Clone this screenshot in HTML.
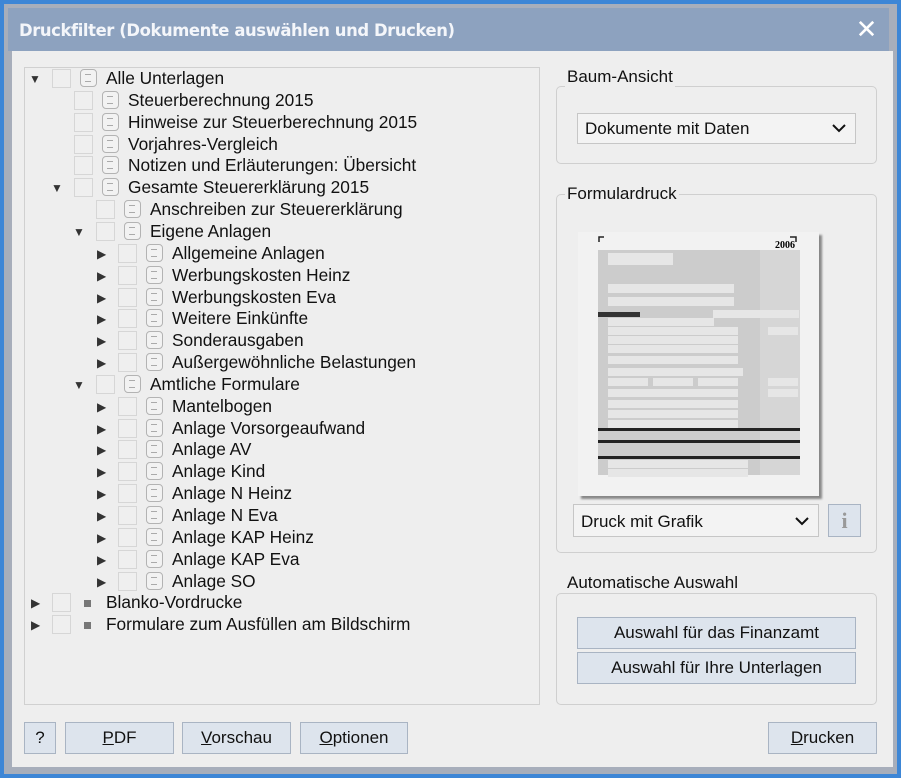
<!DOCTYPE html>
<html><head><meta charset="utf-8"><style>
*{box-sizing:border-box;margin:0;padding:0}
body{width:901px;height:778px;background:#3d86d6;font-family:"Liberation Sans",sans-serif;position:relative;overflow:hidden}
#win{position:absolute;left:4px;top:4px;width:893px;height:770px;background:#a7aebb}
#title{position:absolute;left:8px;top:8px;width:881px;height:43px;background:#8da2bf;color:#f4f6fa;font-weight:bold;font-size:16.4px;line-height:45px;padding-left:11px;font-family:"DejaVu Sans",sans-serif;letter-spacing:-0.4px}
#close{position:absolute;right:12px;top:0;font-size:26px;color:#fff}
#body{position:absolute;left:12px;top:51px;width:881px;height:716px;background:#eeeeee}
.abs{position:absolute}
#tree{left:24px;top:67px;width:516px;height:638px;border:1px solid #d0d0d0;background:#eeeeee}
.row{position:absolute;height:22px;font-size:17.3px;color:#111;line-height:22px;white-space:nowrap}
.cb{position:absolute;width:19px;height:19px;border:1px solid #d6d6d6;background:#efefef;top:2px}
.ic{position:absolute;width:17px;height:18px;border:1.5px solid #b3b3b3;border-radius:4px;top:2px;background:#f2f2f2}
.ic:before{content:"";position:absolute;left:4px;top:4px;width:6px;height:6px;border-top:1.5px solid #aaa;border-bottom:1.5px solid #aaa}
.sq{position:absolute;width:7px;height:7px;background:#777;top:9px}
.ar{position:absolute;top:1px;font-size:12px;color:#333}
fieldset{position:absolute;border:1px solid #cfcfcf;border-radius:5px}
.lg{position:absolute;font-size:17px;background:#eeeeee;padding:0 2px;color:#111}
.sel{position:absolute;border:1px solid #c6c6c6;background:#f3f3f3;font-size:17px;line-height:30px;padding-left:7px;color:#111}
.sel svg{position:absolute;right:9px;top:10px}
.btn{position:absolute;border:1px solid #a9b4c3;background:#dde4ed;font-size:17px;text-align:center;color:#111}
</style></head><body>
<div id="win"></div>
<div id="title">Druckfilter (Dokumente auswählen und Drucken)<span id="close">✕</span></div>
<div id="body"></div>
<div id="tree" class="abs"></div>
<div id="rows"></div>

<fieldset style="left:556px;top:86px;width:321px;height:78px"></fieldset>
<div class="lg" style="left:565px;top:67px">Baum-Ansicht</div>
<div class="sel" style="left:577px;top:113px;width:279px;height:31px">Dokumente mit Daten<svg width="14" height="9"><path d="M1 1L7 7L13 1" stroke="#111" stroke-width="2" fill="none"/></svg></div>

<fieldset style="left:556px;top:194px;width:321px;height:359px"></fieldset>
<div class="lg" style="left:565px;top:184px">Formulardruck</div>
<div class="abs" style="left:578px;top:232px;width:241px;height:264px;background:#f2f2f2;box-shadow:3px 3px 2px #888">
<svg width="241" height="264">
<path d="M21 10V5H26M212 5H218V10" stroke="#222" stroke-width="1.5" fill="none"/>
<text x="197" y="16" font-size="10" font-weight="bold" font-family="Liberation Serif">2006</text>
<rect x="20" y="18" width="162" height="225" fill="#ccc"/>
<rect x="182" y="18" width="40" height="225" fill="#d6d6d6"/>
<g fill="#e6e6e6">
<rect x="30" y="21" width="65" height="12"/><rect x="30" y="52" width="126" height="9"/><rect x="30" y="65" width="126" height="9"/>
<rect x="30" y="86" width="106" height="8"/><rect x="135" y="78" width="86" height="8"/>
<rect x="30" y="95" width="130" height="8"/><rect x="30" y="104" width="130" height="8"/><rect x="30" y="113" width="130" height="8"/><rect x="30" y="124" width="130" height="8"/><rect x="30" y="136" width="135" height="8"/><rect x="30" y="146" width="40" height="8"/><rect x="75" y="146" width="40" height="8"/><rect x="120" y="146" width="40" height="8"/><rect x="30" y="157" width="130" height="8"/><rect x="30" y="168" width="130" height="8"/><rect x="30" y="178" width="130" height="8"/><rect x="30" y="188" width="130" height="8"/><rect x="30" y="228" width="140" height="8"/><rect x="30" y="237" width="140" height="8"/>
<rect x="190" y="95" width="30" height="8"/><rect x="190" y="146" width="30" height="8"/><rect x="190" y="157" width="30" height="8"/>
</g>
<rect x="20" y="80" width="42" height="5" fill="#333"/>
<rect x="20" y="196" width="202" height="3" fill="#222"/><rect x="20" y="208" width="202" height="3" fill="#222"/><rect x="20" y="224" width="202" height="3" fill="#222"/>
</svg></div>
<div class="sel" style="left:573px;top:504px;width:246px;height:33px;line-height:33px">Druck mit Grafik<svg width="14" height="9" style="top:12px"><path d="M1 1L7 7L13 1" stroke="#111" stroke-width="2" fill="none"/></svg></div>
<div class="btn" style="left:828px;top:504px;width:33px;height:33px;font-family:'Liberation Serif';font-weight:bold;color:#999;font-size:22px;line-height:31px">i</div>

<fieldset style="left:556px;top:593px;width:321px;height:112px"></fieldset>
<div class="lg" style="left:565px;top:573px">Automatische Auswahl</div>
<div class="btn" style="left:577px;top:617px;width:279px;height:32px;line-height:30px">Auswahl für das Finanzamt</div>
<div class="btn" style="left:577px;top:652px;width:279px;height:32px;line-height:30px">Auswahl für Ihre Unterlagen</div>

<div class="btn" style="left:24px;top:722px;width:32px;height:32px;line-height:30px">?</div>
<div class="btn" style="left:65px;top:722px;width:109px;height:32px;line-height:30px"><u>P</u>DF</div>
<div class="btn" style="left:182px;top:722px;width:109px;height:32px;line-height:30px"><u>V</u>orschau</div>
<div class="btn" style="left:300px;top:722px;width:108px;height:32px;line-height:30px"><u>O</u>ptionen</div>
<div class="btn" style="left:768px;top:722px;width:109px;height:32px;line-height:30px"><u>D</u>rucken</div>

<script>
var R=[[0,'d','Alle Unterlagen'],[1,'','Steuerberechnung 2015'],[1,'','Hinweise zur Steuerberechnung 2015'],[1,'','Vorjahres-Vergleich'],[1,'','Notizen und Erläuterungen: Übersicht'],[1,'d','Gesamte Steuererklärung 2015'],[2,'','Anschreiben zur Steuererklärung'],[2,'d','Eigene Anlagen'],[3,'r','Allgemeine Anlagen'],[3,'r','Werbungskosten Heinz'],[3,'r','Werbungskosten Eva'],[3,'r','Weitere Einkünfte'],[3,'r','Sonderausgaben'],[3,'r','Außergewöhnliche Belastungen'],[2,'d','Amtliche Formulare'],[3,'r','Mantelbogen'],[3,'r','Anlage Vorsorgeaufwand'],[3,'r','Anlage AV'],[3,'r','Anlage Kind'],[3,'r','Anlage N Heinz'],[3,'r','Anlage N Eva'],[3,'r','Anlage KAP Heinz'],[3,'r','Anlage KAP Eva'],[3,'r','Anlage SO'],[0,'r','Blanko-Vordrucke',1],[0,'r','Formulare zum Ausfüllen am Bildschirm',1]];
var h='';R.forEach(function(r,i){var x=22*r[0],y=67+i*21.85;
h+='<div class="row" style="left:0;top:'+y+'px;width:540px">';
if(r[1]=='d')h+='<span class="ar" style="left:'+(29+x)+'px">▼</span>';
if(r[1]=='r')h+='<span class="ar" style="left:'+(31+x)+'px">▶</span>';
h+='<span class="cb" style="left:'+(52+x)+'px"></span>';
h+=r[3]?'<span class="sq" style="left:'+(84+x)+'px"></span>':'<span class="ic" style="left:'+(80+x)+'px"></span>';
h+='<span style="position:absolute;left:'+(106+x)+'px">'+r[2]+'</span></div>';});
document.getElementById('rows').innerHTML=h;
</script>
</body></html>
